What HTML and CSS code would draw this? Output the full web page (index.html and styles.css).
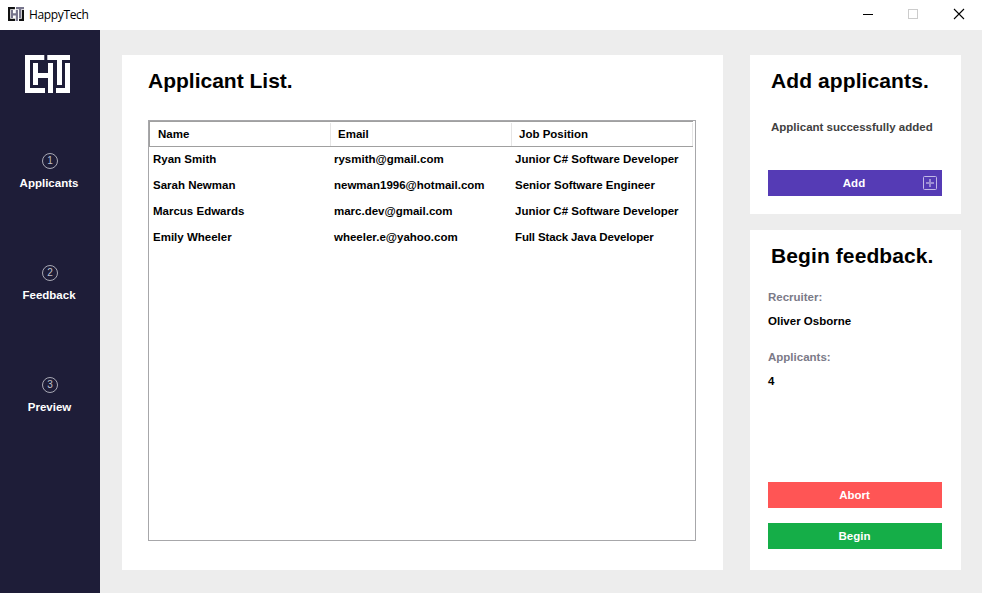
FILE: index.html
```
<!DOCTYPE html>
<html lang="en">
<head>
<meta charset="utf-8">
<title>HappyTech</title>
<link rel="stylesheet" href="styles.css">
</head>
<body>
<header class="titlebar">
  <svg class="app-icon" viewBox="0 0 45 38" preserveAspectRatio="none">
    <path fill="#111" d="M0 0H19.500V6H6V32H20V38H0Z"/>
    <path fill="#77758c" d="M8 8H14V17H22V8H28V38H22V23H14V30H8Z"/>
    <path fill="#77758c" d="M22.500 0H45V6H37V30H31V6H22.500Z"/>
    <path fill="#111" d="M39 8H45V38H31V32H39Z"/>
  </svg>
  <span class="app-name">HappyTech</span>
  <div class="controls">
    <svg viewBox="0 0 12 12"><path d="M1 6.500H11" stroke="#000"/></svg>
    <svg viewBox="0 0 12 12"><rect x="1.500" y="1.500" width="9" height="9" fill="none" stroke="#ccc"/></svg>
    <svg class="close" viewBox="0 0 12 12"><path d="M1 1L11 11M11 1L1 11" stroke="#000" stroke-width="1.100"/></svg>
  </div>
</header>
<div class="body">
  <nav class="sidebar">
    <svg class="logo" viewBox="0 0 45 38">
      <path d="M0 0H19.300V5H5V33H20V38H0Z"/>
      <path d="M8 8H13V18H23V8H28V38H23V23H13V30H8Z"/>
      <path d="M22.300 0H45V5H37V30H32V5H22.300Z"/>
      <path d="M40 8H45V38H31V33H40Z"/>
    </svg>
    <a class="step"><span class="num">1</span><span class="label">Applicants</span></a>
    <a class="step"><span class="num">2</span><span class="label">Feedback</span></a>
    <a class="step"><span class="num">3</span><span class="label preview">Preview</span></a>
  </nav>
  <main class="content">
    <section class="card list">
      <h1>Applicant List.</h1>
      <div class="table">
        <div class="head"><span>Name</span><span>Email</span><span>Job Position</span></div>
        <div class="row"><span>Ryan Smith</span><span>rysmith@gmail.com</span><span>Junior C# Software Developer</span></div>
        <div class="row"><span>Sarah Newman</span><span>newman1996@hotmail.com</span><span>Senior Software Engineer</span></div>
        <div class="row"><span>Marcus Edwards</span><span>marc.dev@gmail.com</span><span>Junior C# Software Developer</span></div>
        <div class="row"><span>Emily Wheeler</span><span>wheeler.e@yahoo.com</span><span class="tight">Full Stack Java Developer</span></div>
      </div>
    </section>
    <aside class="side">
      <section class="card add">
        <h1>Add applicants.</h1>
        <p class="status">Applicant successfully added</p>
        <button class="btn purple"><span>Add</span>
          <svg class="plus" viewBox="0 0 14 14"><rect x=".5" y=".5" width="13" height="13" rx="1" fill="none" stroke="#c3b9e6"/><path d="M7 3V11M3 7H11" stroke="#9c8dd4" stroke-width="2"/></svg>
        </button>
      </section>
      <section class="card begin">
        <h1>Begin feedback.</h1>
        <dl>
          <dt>Recruiter:</dt><dd>Oliver Osborne</dd>
          <dt>Applicants:</dt><dd>4</dd>
        </dl>
        <div class="actions">
          <button class="btn red">Abort</button>
          <button class="btn green">Begin</button>
        </div>
      </section>
    </aside>
  </main>
</div>
</body>
</html>
```
FILE: styles.css
```
* { box-sizing: border-box; }
body {
  margin: 0;
  width: 982px;
  height: 593px;
  display: flex;
  flex-direction: column;
  overflow: hidden;
  background: #ededed;
  color: #000;
  font: bold 11.5px/26px "Liberation Sans", Arial, sans-serif;
}
.titlebar {
  height: 30px;
  display: flex;
  align-items: center;
  background: #fff;
  padding: 0 17px 0 8px;
}
.app-icon { width: 16px; height: 14px; margin-top: -2px; }
.app-name {
  margin-left: 5px;
  font: 12px/30px "Open Sans", sans-serif;
  letter-spacing: -0.35px;
}
.controls { display: flex; gap: 33px; margin-left: auto; margin-top: -2px; }
.controls svg { width: 12px; height: 12px; }
.controls .close { margin-left: 1px; }
.body { flex: 1; display: flex; }
.sidebar {
  width: 100px;
  background: #1e1d38;
  color: #fff;
  display: flex;
  flex-direction: column;
  align-items: center;
  padding: 25px 2px 0 0;
}
.logo { width: 45px; height: 38px; margin: 0 0 60px -3px; fill: #fff; }
.step {
  height: 112px;
  display: flex;
  flex-direction: column;
  align-items: center;
}
.num {
  width: 16px;
  height: 16px;
  margin-left: 2px;
  border: 1px solid #a9a9b5;
  border-radius: 50%;
  color: #c0c0ca;
  font-size: 10px;
  font-weight: normal;
  line-height: 14px;
  text-align: center;
}
.label { line-height: 14px; margin-top: 7px; }
.preview { margin-left: 1px; }
.content { flex: 1; display: flex; gap: 27px; padding: 25px 21px 23px 22px; }
.card { background: #fff; }
h1 { margin: 0; font-size: 21px; line-height: 26px; white-space: nowrap; }
.list { width: 601px; padding: 13px 27px 29px 26px; display: flex; flex-direction: column; }
.table { flex: 1; margin-top: 26px; border: 1px solid #a7a7aa; padding-right: 2px; }
.head, .row { display: grid; grid-template-columns: 181px 181px 1fr; height: 26px; white-space: nowrap; }
.head {
  border: solid #a0a0a0;
  border-width: 1px 0 1px 1px;
  padding-top: 1px;
}
.head span { border-right: 1px solid #e5e5e5; padding-left: 7px; line-height: 23px; }
.head span:first-child { padding-left: 8px; }
.row span { padding-left: 4px; line-height: 25px; }
.row .tight { letter-spacing: -0.13px; }
.side { width: 211px; display: flex; flex-direction: column; gap: 16px; }
.add { height: 159px; padding: 13px 19px 18px 18px; display: flex; flex-direction: column; }
.side h1 { padding-left: 3px; letter-spacing: 0.1px; }
.status { margin: 20px 0 0 3px; color: #414141; white-space: nowrap; }
.btn {
  display: flex;
  align-items: center;
  justify-content: center;
  width: 174px;
  height: 26px;
  padding: 0 1px 0 0;
  border: 0;
  color: #fff;
  font: inherit;
}
.purple { position: relative; margin-top: auto; background: #553bb5; padding-right: 2px; }
.plus { position: absolute; right: 5px; top: 6px; width: 14px; height: 14px; }
.begin { flex: 1; padding: 13px 19px 21px 18px; display: flex; flex-direction: column; }
dl { margin: 16px 0 0; line-height: 24px; }
dt { color: #7b7a88; }
dd { margin: 0 0 12px; }
.actions { margin-top: auto; display: flex; flex-direction: column; gap: 15px; }
.red { background: #ff5555; }
.green { background: #15ae48; }
```
